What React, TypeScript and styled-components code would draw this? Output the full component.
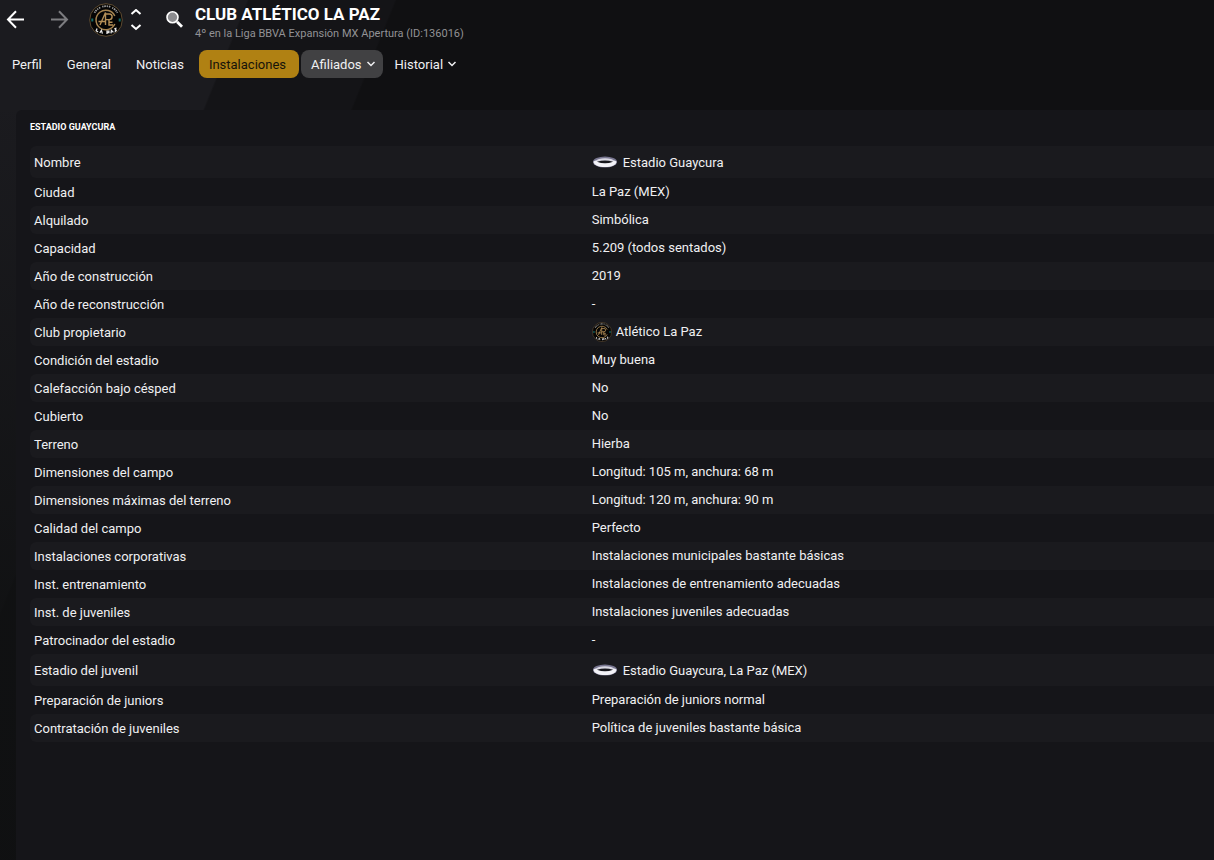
import React from "react";
import styled, { createGlobalStyle, css } from "styled-components";

const GlobalStyle = createGlobalStyle`
  *, *::before, *::after { box-sizing: border-box; }
  body {
    margin: 0;
    background: #111113;
    color: #f0f0f2;
    font-family: Roboto, "Liberation Sans", sans-serif;
    font-size: 13px;
  }
`;

const Page = styled.div`
  min-height: 100vh;
  display: flex;
  flex-direction: column;
  background:
    linear-gradient(180deg, rgba(15, 16, 17, 0) 100px, rgba(15, 16, 17, 0.8) 600px, rgba(15, 16, 17, 0.9) 100%),
    linear-gradient(112deg, #1b1b1f 229px, #141417 231px, #141417 366px, #101012 368px);
`;

const TopBar = styled.header`
  display: flex;
  align-items: center;
  height: 40px;
  padding-left: 6px;
`;

const IconButton = styled.button<{ $gap: number }>`
  display: flex;
  flex: none;
  padding: 0;
  margin-right: ${(p) => p.$gap}px;
  border: 0;
  background: none;
  color: #ffffff;
  cursor: pointer;

  &:disabled {
    color: #7d7d80;
    cursor: default;
  }
`;

const CrestLink = styled.a`
  display: flex;
  margin-right: 7px;
`;

const Stepper = styled.div`
  display: flex;
  flex-direction: column;
  gap: 8px;
  margin-right: 24px;
`;

const Heading = styled.div`
  display: flex;
  flex-direction: column;
  min-width: 0;
  padding-top: 6px;
`;

const ClubName = styled.h1`
  margin: 0;
  font-size: 17px;
  line-height: 22px;
  font-weight: 700;
  color: #ffffff;
  white-space: nowrap;
`;

const ClubInfo = styled.p`
  margin: 0;
  font-size: 11px;
  line-height: 18px;
  color: #929295;
  white-space: nowrap;
`;

const Nav = styled.nav`
  display: flex;
  gap: 2px;
  margin: 10px 0 32px;
  padding-left: 2px;
`;

const tabStyle = css`
  display: flex;
  align-items: center;
  height: 28px;
  padding: 0 13px 0 10px;
  border: 0;
  border-radius: 8px;
  font: inherit;
  white-space: nowrap;
  cursor: pointer;
`;

const Tab = styled.a<{ $active?: boolean }>`
  ${tabStyle}
  background: ${(p) => (p.$active ? "#b08113" : "transparent")};
  color: ${(p) => (p.$active ? "#16130a" : "#f0f0f2")};
  text-decoration: none;
`;

const MenuTab = styled.button<{ $raised?: boolean }>`
  ${tabStyle}
  gap: 4px;
  padding-right: 7px;
  background: ${(p) => (p.$raised ? "#414143" : "transparent")};
  color: #f0f0f2;
`;

const Panel = styled.main`
  flex: 1;
  margin-left: 16px;
  padding-left: 14px;
  border-top-left-radius: 6px;
  background: #151519;
`;

const PanelTitle = styled.h2`
  margin: 0;
  padding: 9px 0 11px;
  font-size: 9px;
  line-height: 16px;
  font-weight: 700;
  color: #ffffff;
`;

const Facts = styled.table`
  width: 100%;
  border-collapse: separate;
  border-spacing: 0;
  table-layout: fixed;
`;

const FactRow = styled.tr<{ $tall?: boolean }>`
  height: ${(p) => (p.$tall ? 32 : 28)}px;

  &:nth-child(odd) > * {
    background: #1a1a1e;
  }
`;

const Label = styled.th`
  width: 47.1%;
  padding: 2px 4px 0;
  border-radius: 6px 0 0 6px;
  font-weight: 400;
  line-height: 16px;
  text-align: left;
`;

const Value = styled.td<{ $tall?: boolean }>`
  padding: ${(p) => (p.$tall ? "2px 4px 0" : "0 4px")};
  line-height: 16px;
`;

const WithIcon = styled.span<{ $gap: number }>`
  display: flex;
  align-items: center;
  gap: ${(p) => p.$gap}px;
  height: 16px;

  & > svg {
    flex: none;
  }
`;

function Arrow({ back }: { back?: boolean }) {
  return (
    <svg width="20" height="20" viewBox="0 0 20 20" fill="none" stroke="currentColor" strokeWidth="2" aria-hidden="true">
      <path d={back ? "M18 9.500H2.500M10 1.300L2 9.500l8 8.200" : "M1 9.500h15.500M9 1.300l8 8.200-8 8.200"} />
    </svg>
  );
}

function Chevron({ up }: { up?: boolean }) {
  return (
    <svg width="12" height="7" viewBox="0 0 12 7" fill="none" stroke="currentColor" strokeWidth="2" aria-hidden="true">
      <path d={up ? "M1.500 5L6 1l4.500 4" : "M1.500 1L6 5l4.500-4"} />
    </svg>
  );
}

function Caret() {
  return (
    <svg width="10" height="6" viewBox="0 0 10 6" fill="none" stroke="currentColor" strokeWidth="1.500" aria-hidden="true">
      <path d="M1.500 1L5 4.500 8.500 1" />
    </svg>
  );
}

function SearchIcon() {
  return (
    <svg width="18" height="18" viewBox="0 0 18 18" aria-hidden="true">
      <circle cx="6.500" cy="6.300" r="5.500" fill="#8c8c8f" stroke="#fff" strokeWidth="1.600" />
      <path d="M11 10.800l5 5" stroke="#fff" strokeWidth="2.800" />
    </svg>
  );
}

function Crest({ size }: { size: number }) {
  return (
    <svg width={size} height={size} viewBox="0 0 34 34" fill="none" aria-hidden="true">
      <circle cx="17" cy="17" r="16.300" fill="#050505" stroke="#5f4c31" strokeWidth="1" />
      <path d="M25.800 13A9.800 9.800 0 1 0 25.800 21" stroke="#a5834f" strokeWidth="1.500" />
      <path d="M5.500 9.800A13.300 13.300 0 0 1 28.500 9.800" stroke="#9c9c9c" strokeWidth="1.800" strokeDasharray="1.300 .7 1.600 .8 1.200 .9 1.500 2" />
      <path d="M8 25.500l-.8 2.200 1.900 1.400M10.800 30l1.600-2.600 1 3.200M18 31v-2.800h1.900v1.400H18M22 30.400l.4-3 2 2M25.300 25.800l1.500-.4-.4 2.800 1.300-1" stroke="#e8e8e8" strokeWidth="1.300" />
      <path d="M3.300 15.500v3M30.700 15.500v3" stroke="#126b67" strokeWidth="2" />
      <g stroke="#b48f57" strokeWidth="1.400">
        <path d="M11 22l5.500-12.500V22M9.500 18.500h7" />
        <path d="M16.500 11h3.800a2.800 2.800 0 0 1 0 5.600h-3.800M20 16.600V22h4M20 19.300h3.500" />
      </g>
    </svg>
  );
}

function StadiumIcon() {
  return (
    <svg width="26" height="14" viewBox="0 1 26 14" aria-hidden="true">
      <ellipse cx="13" cy="7" rx="12" ry="5.600" fill="#77758f" />
      <path d="M1.500 6.500C3 4 23 4 24.500 6.500 24.500 10 20 12 13 12S1.500 10 1.500 6.500z" fill="#f3f2f7" />
      <ellipse cx="13" cy="5.700" rx="8.500" ry="2.500" fill="#d9d8e3" />
      <path d="M5 6.800Q13 4.200 21 6.800 17 8.300 13 8.300T5 6.800z" fill="#17171c" />
    </svg>
  );
}

type Fact = { label: string; value: string; icon?: "stadium" | "crest" };

const facts: Fact[] = [
  { label: "Nombre", value: "Estadio Guaycura", icon: "stadium" },
  { label: "Ciudad", value: "La Paz (MEX)" },
  { label: "Alquilado", value: "Simbólica" },
  { label: "Capacidad", value: "5.209 (todos sentados)" },
  { label: "Año de construcción", value: "2019" },
  { label: "Año de reconstrucción", value: "-" },
  { label: "Club propietario", value: "Atlético La Paz", icon: "crest" },
  { label: "Condición del estadio", value: "Muy buena" },
  { label: "Calefacción bajo césped", value: "No" },
  { label: "Cubierto", value: "No" },
  { label: "Terreno", value: "Hierba" },
  { label: "Dimensiones del campo", value: "Longitud: 105 m, anchura: 68 m" },
  { label: "Dimensiones máximas del terreno", value: "Longitud: 120 m, anchura: 90 m" },
  { label: "Calidad del campo", value: "Perfecto" },
  { label: "Instalaciones corporativas", value: "Instalaciones municipales bastante básicas" },
  { label: "Inst. entrenamiento", value: "Instalaciones de entrenamiento adecuadas" },
  { label: "Inst. de juveniles", value: "Instalaciones juveniles adecuadas" },
  { label: "Patrocinador del estadio", value: "-" },
  { label: "Estadio del juvenil", value: "Estadio Guaycura, La Paz (MEX)", icon: "stadium" },
  { label: "Preparación de juniors", value: "Preparación de juniors normal" },
  { label: "Contratación de juveniles", value: "Política de juveniles bastante básica" },
];

function FactValue({ value, icon }: Fact) {
  if (icon === "stadium") {
    return (
      <WithIcon $gap={5}>
        <StadiumIcon />
        {value}
      </WithIcon>
    );
  }
  if (icon === "crest") {
    return (
      <WithIcon $gap={4}>
        <Crest size={20} />
        {value}
      </WithIcon>
    );
  }
  return <>{value}</>;
}

export default function App() {
  return (
    <Page>
      <GlobalStyle />
      <TopBar>
        <IconButton $gap={24} aria-label="Atrás">
          <Arrow back />
        </IconButton>
        <IconButton $gap={19} aria-label="Adelante" disabled>
          <Arrow />
        </IconButton>
        <CrestLink href="#club" aria-label="Club Atlético La Paz">
          <Crest size={34} />
        </CrestLink>
        <Stepper>
          <IconButton $gap={0} aria-label="Club anterior">
            <Chevron up />
          </IconButton>
          <IconButton $gap={0} aria-label="Club siguiente">
            <Chevron />
          </IconButton>
        </Stepper>
        <IconButton $gap={11} aria-label="Buscar">
          <SearchIcon />
        </IconButton>
        <Heading>
          <ClubName>CLUB ATLÉTICO LA PAZ</ClubName>
          <ClubInfo>4º en la Liga BBVA Expansión MX Apertura (ID:136016)</ClubInfo>
        </Heading>
      </TopBar>
      <Nav>
        <Tab href="#perfil">Perfil</Tab>
        <Tab href="#general">General</Tab>
        <Tab href="#noticias">Noticias</Tab>
        <Tab href="#instalaciones" $active aria-current="page">
          Instalaciones
        </Tab>
        <MenuTab $raised aria-haspopup="menu">
          Afiliados
          <Caret />
        </MenuTab>
        <MenuTab aria-haspopup="menu">
          Historial
          <Caret />
        </MenuTab>
      </Nav>
      <Panel>
        <PanelTitle>ESTADIO GUAYCURA</PanelTitle>
        <Facts>
          <tbody>
            {facts.map((fact) => (
              <FactRow key={fact.label} $tall={fact.icon === "stadium"}>
                <Label scope="row">{fact.label}</Label>
                <Value $tall={fact.icon === "stadium"}>
                  <FactValue {...fact} />
                </Value>
              </FactRow>
            ))}
          </tbody>
        </Facts>
      </Panel>
    </Page>
  );
}
